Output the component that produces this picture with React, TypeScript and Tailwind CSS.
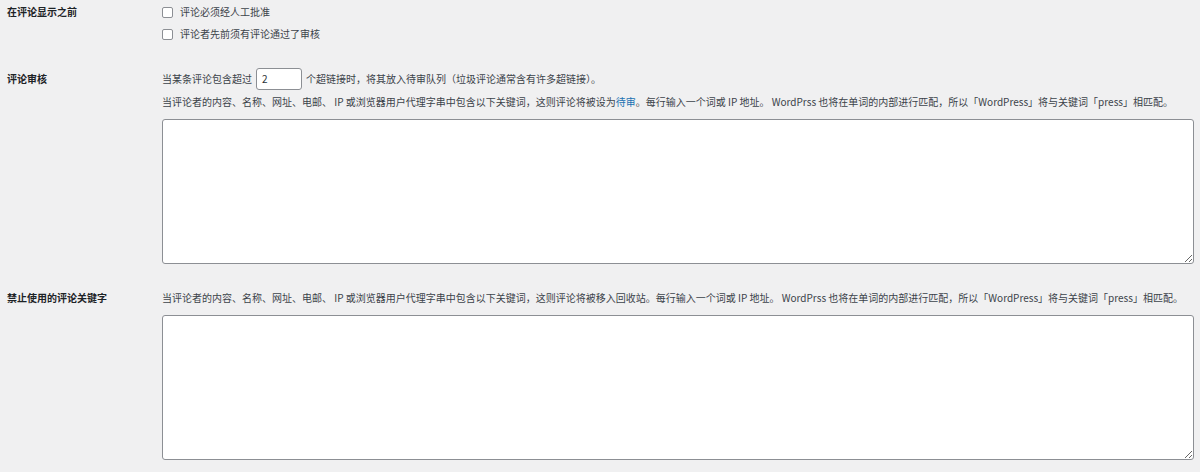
import React from "react";

const font = { fontFamily: '"Noto Sans CJK SC", "Noto Sans", sans-serif' };

function Checkbox() {
  return <span className="inline-block w-[11px] h-[11px] bg-white border border-[#8c8f94] rounded-[2px] mr-[7px] shrink-0" />;
}

export default function App() {
  return (
    <div className="w-[1200px] h-[472px] bg-[#f0f0f1] text-[10px] text-[#3c434a] overflow-hidden pt-[1px]" style={font}>
      {/* Row 1 */}
      <div className="flex">
        <div className="w-[162px] shrink-0 pl-[7px] pt-[3px] leading-[16px] font-bold text-[#1d2327]">在评论显示之前</div>
        <div className="flex flex-col">
          <label className="h-[22px] flex items-center leading-[16px]">
            <Checkbox />
            <span>评论必须经人工批准</span>
          </label>
          <label className="h-[22px] flex items-center leading-[16px]">
            <Checkbox />
            <span>评论者先前须有评论通过了审核</span>
          </label>
        </div>
      </div>

      {/* Row 2 */}
      <div className="flex mt-[23px]">
        <div className="w-[162px] shrink-0 pl-[7px] pt-[3px] leading-[16px] font-bold text-[#1d2327]">评论审核</div>
        <div className="flex flex-col">
          <div className="h-[22px] flex items-center leading-[16px]">
            <span>当某条评论包含超过</span>
            <span className="mx-[4px] w-[46px] h-[22px] bg-white border border-[#8c8f94] rounded-[3px] flex items-center pl-[5px] text-[#2c3338]">2</span>
            <span>个超链接时，将其放入待审队列（垃圾评论通常含有许多超链接）。</span>
          </div>
          <p className="mt-[4px] leading-[16px]">
            当评论者的内容、名称、网址、电邮、 IP 或浏览器用户代理字串中包含以下关键词，这则评论将被设为<span className="text-[#2271b1]">待审</span>。每行输入一个词或 IP 地址。 WordPrss 也将在单词的内部进行匹配，所以「WordPress」将与关键词「press」相匹配。
          </p>
          <textarea className="mt-[9px] w-[1032px] h-[145px] bg-white border border-[#8c8f94] rounded-[3px] block outline-none" />
        </div>
      </div>

      {/* Row 3 */}
      <div className="flex mt-[26px]">
        <div className="w-[162px] shrink-0 pl-[7px] leading-[16px] font-bold text-[#1d2327]">禁止使用的评论关键字</div>
        <div className="flex flex-col">
          <p className="leading-[16px]">
            当评论者的内容、名称、网址、电邮、 IP 或浏览器用户代理字串中包含以下关键词，这则评论将被移入回收站。每行输入一个词或 IP 地址。 WordPrss 也将在单词的内部进行匹配，所以「WordPress」将与关键词「press」相匹配。
          </p>
          <textarea className="mt-[9px] w-[1032px] h-[145px] bg-white border border-[#8c8f94] rounded-[3px] block outline-none" />
        </div>
      </div>
    </div>
  );
}
